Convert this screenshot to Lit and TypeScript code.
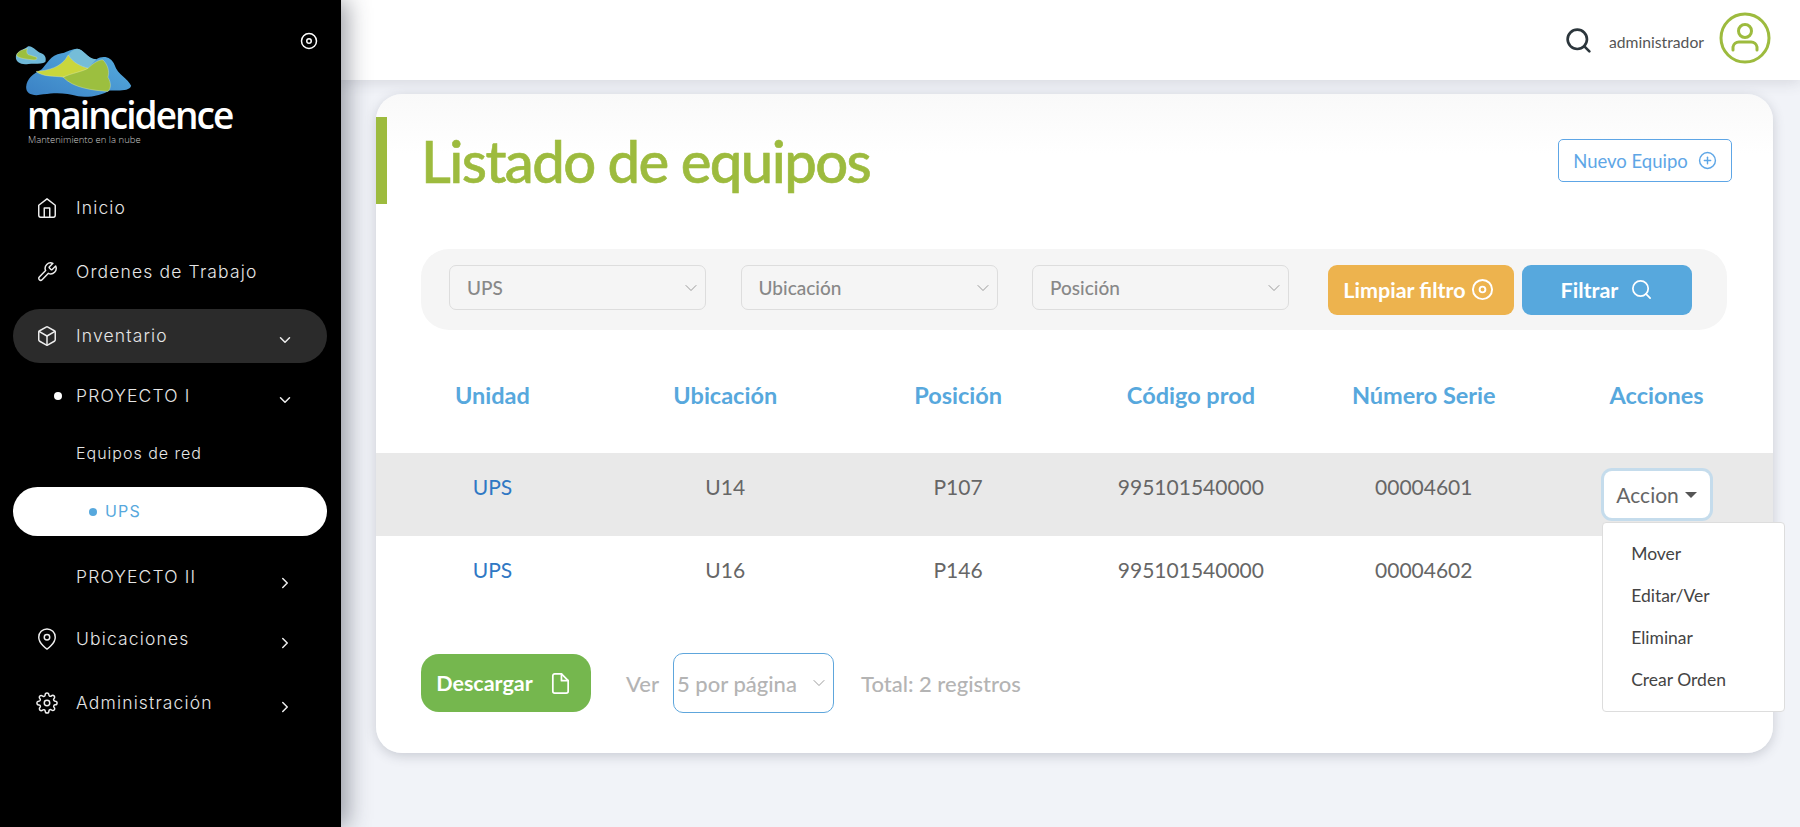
import { LitElement, css, html, svg } from "lit";
import { customElement } from "lit/decorators.js";

const icon = (body: unknown, size = 22, width = 1.6) => html`
  <svg width=${size} height=${size} viewBox="0 0 24 24" fill="none" stroke="currentColor"
    stroke-width=${width} stroke-linecap="round" stroke-linejoin="round">${body}</svg>
`;

const homeIcon = svg`<path d="M3 9l9-7 9 7v11a2 2 0 0 1-2 2H5a2 2 0 0 1-2-2z"/><polyline points="9 22 9 12 15 12 15 22"/>`;
const toolIcon = svg`<path d="M14.7 6.3a1 1 0 0 0 0 1.4l1.6 1.6a1 1 0 0 0 1.4 0l3.77-3.77a6 6 0 0 1-7.94 7.94l-6.91 6.91a2.12 2.12 0 0 1-3-3l6.91-6.91a6 6 0 0 1 7.94-7.94l-3.76 3.76z"/>`;
const boxIcon = svg`<path d="M21 16V8a2 2 0 0 0-1-1.73l-7-4a2 2 0 0 0-2 0l-7 4A2 2 0 0 0 3 8v8a2 2 0 0 0 1 1.73l7 4a2 2 0 0 0 2 0l7-4A2 2 0 0 0 21 16z"/><polyline points="3.27 6.96 12 12.01 20.73 6.96"/><line x1="12" y1="22.08" x2="12" y2="12"/>`;
const pinIcon = svg`<path d="M21 10c0 7-9 13-9 13s-9-6-9-13a9 9 0 0 1 18 0z"/><circle cx="12" cy="10" r="3"/>`;
const gearIcon = svg`<circle cx="12" cy="12" r="3"/><path d="M19.4 15a1.65 1.65 0 0 0 .33 1.82l.06.06a2 2 0 0 1 0 2.83 2 2 0 0 1-2.83 0l-.06-.06a1.65 1.65 0 0 0-1.82-.33 1.65 1.65 0 0 0-1 1.51V21a2 2 0 0 1-2 2 2 2 0 0 1-2-2v-.09A1.65 1.65 0 0 0 9 19.4a1.65 1.65 0 0 0-1.82.33l-.06.06a2 2 0 0 1-2.83 0 2 2 0 0 1 0-2.83l.06-.06a1.65 1.65 0 0 0 .33-1.82 1.65 1.65 0 0 0-1.51-1H3a2 2 0 0 1-2-2 2 2 0 0 1 2-2h.09A1.65 1.65 0 0 0 4.6 9a1.65 1.65 0 0 0-.33-1.82l-.06-.06a2 2 0 0 1 0-2.83 2 2 0 0 1 2.83 0l.06.06a1.65 1.65 0 0 0 1.82.33H9a1.65 1.65 0 0 0 1-1.51V3a2 2 0 0 1 2-2 2 2 0 0 1 2 2v.09a1.65 1.65 0 0 0 1 1.51 1.65 1.65 0 0 0 1.82-.33l.06-.06a2 2 0 0 1 2.83 0 2 2 0 0 1 0 2.83l-.06.06a1.65 1.65 0 0 0-.33 1.82V9a1.65 1.65 0 0 0 1.51 1H21a2 2 0 0 1 2 2 2 2 0 0 1-2 2h-.09a1.65 1.65 0 0 0-1.51 1z"/>`;
const targetIcon = svg`<circle cx="12" cy="12" r="10"/><circle cx="12" cy="12" r="3"/>`;
const searchIcon = svg`<circle cx="11" cy="11" r="8"/><line x1="21" y1="21" x2="16.65" y2="16.65"/>`;
const plusIcon = svg`<circle cx="12" cy="12" r="10"/><line x1="12" y1="8" x2="12" y2="16"/><line x1="8" y1="12" x2="16" y2="12"/>`;
const fileIcon = svg`<path d="M13 2H6a2 2 0 0 0-2 2v16a2 2 0 0 0 2 2h12a2 2 0 0 0 2-2V9z"/><polyline points="13 2 13 9 20 9"/>`;
const downIcon = svg`<polyline points="6 9 12 15 18 9"/>`;
const rightIcon = svg`<polyline points="9 6 15 12 9 18"/>`;

const logoMark = html`
  <svg class="mark" width="118" height="53" viewBox="45 135 355 160">
    <defs>
      <linearGradient id="sea" x1="0" y1="1" x2="1" y2="0">
        <stop offset="0" stop-color="#3a80c4" />
        <stop offset="1" stop-color="#58b0e0" />
      </linearGradient>
    </defs>
    <path fill="#6fb8d8" d="M47 170C48 155 70 150 82 140C95 135 105 150 118 158C135 162 140 175 136 186C125 194 100 190 85 192C65 195 46 190 47 170Z" />
    <path fill="#9cbf3f" stroke="#e8f0d0" d="M50 162C58 150 72 148 82 146C78 154 80 160 84 164L110 172C112 178 108 181 100 180C80 178 60 176 50 168Z" />
    <path fill="url(#sea)" d="M78 262C80 235 100 222 125 208C140 195 150 165 185 160C200 157 205 150 230 146C250 145 265 180 290 178C310 165 335 170 345 195C355 225 385 235 395 258C390 275 360 272 330 272C310 285 270 295 235 290C200 280 170 278 130 284C100 290 78 285 78 262Z" />
    <path fill="#75bdd8" d="M205 165C212 155 222 147 232 146C250 145 262 176 290 178L265 205C245 200 220 190 205 165Z" />
    <path fill="#c9d63c" stroke="#e8f0d0" d="M108 215C140 212 185 205 205 165C220 190 245 200 265 205L262 215C240 225 215 235 190 232C160 228 130 232 108 215Z" />
    <path fill="#9cbf3f" stroke="#e8f0d0" d="M190 232C215 220 250 215 265 205C280 190 300 178 310 180C325 195 330 215 325 232C335 250 335 265 325 275C280 272 220 265 190 232Z" />
  </svg>
`;

const rows = [
  { unit: "UPS", place: "U14", pos: "P107", code: "995101540000", serial: "00004601", hot: true },
  { unit: "UPS", place: "U16", pos: "P146", code: "995101540000", serial: "00004602", hot: false },
];

@customElement("app-root")
class AppRoot extends LitElement {
  static styles = css`
    :host {
      display: block;
      height: 827px;
      overflow: hidden;
      font-family: Lato, "Noto Sans", sans-serif;
    }

    .page {
      display: grid;
      grid-template-columns: 341px 1fr;
      height: 100%;
      background: #f1f3f8;
    }

    /* sidebar */

    .sidebar {
      position: relative;
      z-index: 2;
      background: #000;
      color: #e6e6e6;
      font-family: Inter, "Noto Sans", sans-serif;
      font-weight: 300;
      font-size: 17.5px;
      letter-spacing: 1.15px;
      box-shadow: 6px 0 22px rgba(40, 44, 60, 0.45);
    }

    .brand {
      position: relative;
      height: 181px;
      box-sizing: border-box;
      padding: 45px 0 0 0;
    }

    .mark {
      display: block;
      margin-left: 15px;
    }

    .brand-name {
      margin: 2px 0 0 27px;
      font-family: "Open Sans", sans-serif;
      font-size: 37px;
      line-height: 30px;
      font-weight: 600;
      letter-spacing: -1.95px;
      color: #fff;
    }

    .brand-tag {
      margin: 4px 0 0 28px;
      font-family: "Open Sans", sans-serif;
      font-size: 9.5px;
      line-height: 11px;
      letter-spacing: 0;
      color: #ccc;
    }

    .collapse {
      position: absolute;
      top: 32px;
      right: 23px;
      color: #fff;
    }

    nav {
      display: flex;
      flex-direction: column;
      gap: 10px;
      margin: 0 14px 0 13px;
    }

    .item {
      display: flex;
      align-items: center;
      height: 54px;
      box-sizing: border-box;
      padding: 0 0 2px 63px;
      border-radius: 27px;
      position: relative;
    }

    .item .lead {
      position: absolute;
      left: 23px;
      top: 50%;
      transform: translateY(-50%);
      display: flex;
      color: #eee;
    }

    .item .chev {
      position: absolute;
      left: 263px;
      top: 50%;
      margin-top: -5px;
      display: flex;
      color: #eee;
    }

    .open {
      background: #2b2b2b;
    }

    .h46 { height: 46px; }
    .h48 { height: 48px; }
    .h62 { height: 62px; }
    .h42 { height: 42px; }
    .h66 { height: 66px; }

    .item.h62 .chev {
      margin-top: -3px;
    }

    .item.small {
      padding-bottom: 0;
      font-size: 16px;
      letter-spacing: 1px;
    }

    .dot {
      position: absolute;
      left: 41px;
      top: 50%;
      width: 8px;
      height: 8px;
      margin-top: -4px;
      border-radius: 50%;
      background: #fff;
    }

    .item.current {
      height: 49px;
      padding-left: 92px;
      background: #fff;
      color: #57a8dd;
      font-size: 16px;
      font-weight: 400;
    }

    .current .dot {
      left: 76px;
      background: #57a8dd;
    }

    /* main */

    main {
      min-width: 0;
    }

    header {
      display: flex;
      align-items: center;
      justify-content: flex-end;
      position: relative;
      height: 80px;
      box-sizing: border-box;
      padding-right: 29px;
      background: #fff;
      box-shadow: 0 2px 14px rgba(60, 64, 80, 0.16);
      color: #555;
      font-size: 15.7px;
      font-weight: 400;
    }

    .head-search {
      display: flex;
      color: #2c363c;
      margin: 0 16px 0 0;
    }

    .who {
      margin-top: 3px;
    }

    .avatar {
      display: flex;
      margin: -4px 0 0 15px;
      color: #9dbb3e;
    }

    .card {
      position: relative;
      margin: 14px 27px 0 35px;
      padding: 23px 0 40px;
      border-radius: 26px;
      background: linear-gradient(#f9f9f9, #fff 60px);
      box-shadow: 0 3px 12px rgba(60, 64, 80, 0.22);
    }

    .title-row {
      display: flex;
      justify-content: space-between;
      align-items: flex-start;
      height: 87px;
      box-sizing: border-box;
      padding: 0 41px 0 34px;
      border-left: 11px solid #9dbb3e;
    }

    h1 {
      margin: 0;
      font-size: 58px;
      line-height: 87px;
      font-weight: 500;
      letter-spacing: -1.6px;
      color: #9dbb3e;
      -webkit-text-stroke: 0.6px #9dbb3e;
    }

    .new {
      display: flex;
      align-items: center;
      justify-content: center;
      gap: 10px;
      width: 174px;
      height: 43px;
      margin-top: 22px;
      box-sizing: border-box;
      border: 1px solid #5ea6e6;
      border-radius: 5px;
      color: #5ea6e6;
      font-size: 18.5px;
      background: #fff;
    }

    .filters {
      display: flex;
      align-items: center;
      height: 81px;
      margin: 45px 46px 0 45px;
      padding-left: 28px;
      border-radius: 28px;
      background: #f5f5f5;
    }

    .select {
      display: flex;
      align-items: center;
      position: relative;
      box-sizing: border-box;
      color: #888;
      font-size: 19px;
      font-weight: 500;
    }

    .select .arrow {
      position: absolute;
      top: 50%;
      right: 4px;
      transform: translateY(-50%);
      display: flex;
      color: #888;
    }

    .filters .select {
      width: 257px;
      height: 45px;
      margin: -4px 34.5px 0 0;
      padding-left: 17px;
      border: 1px solid #ddd;
      border-radius: 7px;
    }

    .filters .select:nth-child(3) {
      margin-right: 39px;
    }

    .btn {
      display: flex;
      align-items: center;
      justify-content: center;
      color: #fff;
      font-size: 21.5px;
      font-weight: 700;
    }

    .clear {
      gap: 5px;
      width: 186px;
      height: 50px;
      margin-right: 8px;
      box-sizing: border-box;
      padding-right: 5px;
      border-radius: 9px;
      background: #edb34e;
    }

    .go {
      gap: 12px;
      width: 170px;
      height: 50px;
      border-radius: 9px;
      background: #57a8dd;
    }

    .grid {
      display: grid;
      grid-template-columns: repeat(6, 1fr);
      text-align: center;
    }

    .heads {
      height: 123px;
      box-sizing: border-box;
      padding-top: 50px;
      color: #57a8dd;
      font-size: 23.5px;
      line-height: 30px;
      font-weight: 700;
    }

    .row {
      height: 83px;
      box-sizing: border-box;
      padding-top: 20px;
      color: #666;
      font-size: 21px;
      line-height: 28px;
    }

    .row.hot {
      background: #e9e9e9;
    }

    .unit {
      color: #2f78c4;
    }

    .action {
      position: relative;
      display: flex;
      justify-content: center;
    }

    .toggle {
      display: flex;
      align-items: center;
      justify-content: center;
      gap: 6px;
      width: 106px;
      height: 47px;
      margin-top: -2px;
      box-sizing: border-box;
      border-radius: 8px;
      background: #fff;
      color: #666;
      font-size: 21px;
      box-shadow: 0 0 0 3px #c5dcec;
    }

    .caret {
      width: 0;
      height: 0;
      border: 6px solid transparent;
      border-top: 6px solid #555;
      border-bottom: 0;
    }

    .menu {
      position: absolute;
      z-index: 3;
      top: 49px;
      left: 62px;
      width: 183px;
      height: 190px;
      box-sizing: border-box;
      padding: 10px 0 0 28px;
      border: 1px solid #ddd;
      border-radius: 4px;
      background: #fff;
      color: #444;
      font-size: 17.5px;
      line-height: 42px;
      text-align: left;
    }

    .foot {
      display: flex;
      align-items: center;
      height: 60px;
      margin: 34px 0 0 45px;
      color: #b4b4b4;
      font-size: 22px;
      font-weight: 500;
    }

    .download {
      gap: 16px;
      width: 170px;
      height: 58px;
      margin-right: 35px;
      box-sizing: border-box;
      padding-right: 4px;
      border-radius: 18px;
      background: #75b74e;
    }

    .foot .select {
      width: 161px;
      height: 60px;
      margin: 0 27px 0 14px;
      padding-left: 3px;
      border: 1px solid #5ea6dc;
      border-radius: 10px;
      color: #b4b4b4;
      font-size: 22px;
      background: #fff;
    }
  `;

  renderItem(label: string, lead: unknown, chev: unknown, cls = "") {
    return html`
      <div class="item ${cls}">
        ${lead ? html`<span class="lead">${icon(lead)}</span>` : ""}
        ${label}
        ${chev ? html`<span class="chev">${icon(chev, 18, 2)}</span>` : ""}
      </div>
    `;
  }

  renderSelect(label: string) {
    return html`
      <div class="select">
        ${label}
        <span class="arrow">${icon(downIcon, 20, 1)}</span>
      </div>
    `;
  }

  render() {
    return html`
      <div class="page">
        <aside class="sidebar">
          <div class="brand">
            ${logoMark}
            <div class="brand-name">maincidence</div>
            <div class="brand-tag">Mantenimiento en la nube</div>
            <span class="collapse">${icon(targetIcon, 18, 2)}</span>
          </div>
          <nav>
            ${this.renderItem("Inicio", homeIcon, null)}
            ${this.renderItem("Ordenes de Trabajo", toolIcon, null)}
            ${this.renderItem("Inventario", boxIcon, downIcon, "open")}
            <div class="item h46">
              <span class="dot"></span>
              PROYECTO I
              <span class="chev">${icon(downIcon, 18, 2)}</span>
            </div>
            <div class="item h48 small">Equipos de red</div>
            <div class="item current"><span class="dot"></span>UPS</div>
            ${this.renderItem("PROYECTO II", null, rightIcon, "h62")}
            ${this.renderItem("Ubicaciones", pinIcon, rightIcon, "h42")}
            ${this.renderItem("Administración", gearIcon, rightIcon, "h66")}
          </nav>
        </aside>

        <main>
          <header>
            <span class="head-search">${icon(searchIcon, 29, 2.2)}</span>
            <span class="who">administrador</span>
            <span class="avatar">
              <svg width="52" height="52" viewBox="0 0 52 52" fill="none" stroke="currentColor" stroke-width="3" stroke-linecap="round">
                <circle cx="26" cy="26" r="24" />
                <circle cx="26" cy="19" r="6.5" />
                <path d="M14 38v-3a6 6 0 0 1 6-5h12a6 6 0 0 1 6 5v3" />
              </svg>
            </span>
          </header>

          <section class="card">
            <div class="title-row">
              <h1>Listado de equipos</h1>
              <div class="new">Nuevo Equipo ${icon(plusIcon, 19, 1.8)}</div>
            </div>

            <div class="filters">
              ${this.renderSelect("UPS")}
              ${this.renderSelect("Ubicación")}
              ${this.renderSelect("Posición")}
              <div class="btn clear">Limpiar filtro ${icon(targetIcon, 23, 2)}</div>
              <div class="btn go">Filtrar ${icon(searchIcon, 23, 1.8)}</div>
            </div>

            <div class="grid heads">
              <div>Unidad</div>
              <div>Ubicación</div>
              <div>Posición</div>
              <div>Código prod</div>
              <div>Número Serie</div>
              <div>Acciones</div>
            </div>

            ${rows.map(
              (r) => html`
                <div class="grid row ${r.hot ? "hot" : ""}">
                  <div class="unit">${r.unit}</div>
                  <div>${r.place}</div>
                  <div>${r.pos}</div>
                  <div>${r.code}</div>
                  <div>${r.serial}</div>
                  <div class="action">
                    ${r.hot
                      ? html`
                          <div class="toggle">Accion <span class="caret"></span></div>
                          <div class="menu">
                            <div>Mover</div>
                            <div>Editar/Ver</div>
                            <div>Eliminar</div>
                            <div>Crear Orden</div>
                          </div>
                        `
                      : ""}
                  </div>
                </div>
              `
            )}

            <div class="foot">
              <div class="btn download">Descargar ${icon(fileIcon, 23, 1.8)}</div>
              Ver
              ${this.renderSelect("5 por página")}
              Total: 2 registros
            </div>
          </section>
        </main>
      </div>
    `;
  }
}
